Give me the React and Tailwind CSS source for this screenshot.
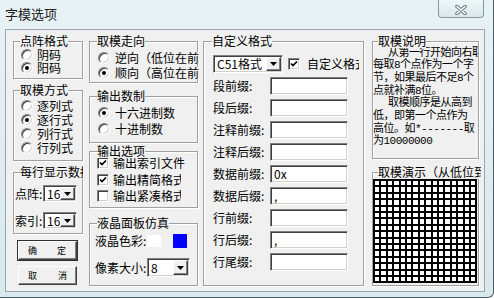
const SUNKEN =
  "border border-t-[#808080] border-l-[#808080] border-r-white border-b-white bg-white shadow-[inset_1px_1px_0_#404040,inset_-1px_-1px_0_#d4d0c8]";
const RAISED =
  "border border-t-white border-l-white border-r-[#404040] border-b-[#404040] bg-[#f0f0f0] shadow-[inset_-1px_-1px_0_#808080]";

function Group({ title, className = "", titleClass = "left-[6px]", children }) {
  return (
    <div
      className={`relative border border-[#a0a0a0] shadow-[1px_1px_0_#fff,inset_1px_1px_0_#fff] ${className}`}
    >
      <span
        className={`absolute top-[-8px] z-10 whitespace-nowrap bg-[#f0f0f0] text-[12px] leading-[14px] ${titleClass}`}
      >
        {title}
      </span>
      {children}
    </div>
  );
}

function Radio({ checked }) {
  return (
    <span
      className={`flex h-[12px] w-[12px] shrink-0 items-center justify-center rounded-full ${SUNKEN}`}
    >
      {checked && <span className="h-[4px] w-[4px] rounded-full bg-black" />}
    </span>
  );
}

function Check({ checked }) {
  return (
    <span className={`flex h-[12px] w-[12px] shrink-0 items-center justify-center ${SUNKEN}`}>
      {checked && (
        <svg width="8" height="8" viewBox="0 0 8 8">
          <path d="M1 3.5 L3 5.6 L7 1.5" stroke="black" strokeWidth="1.7" fill="none" />
        </svg>
      )}
    </span>
  );
}

function Combo({ value, className = "" }) {
  return (
    <div className={`flex items-stretch p-px ${SUNKEN} ${className}`}>
      <span className="flex flex-1 items-center pl-[2px] text-[12px] leading-none">{value}</span>
      <span className={`flex w-[15px] items-center justify-center ${RAISED}`}>
        <svg width="7" height="4" viewBox="0 0 7 4">
          <path d="M0 0H7L3.5 4Z" fill="black" />
        </svg>
      </span>
    </div>
  );
}

function RadioRow({ label, checked, h, gap = "gap-[4px]" }) {
  return (
    <div className={`flex items-center ${h} ${gap}`}>
      <Radio checked={checked} />
      <span className="relative z-10 whitespace-nowrap bg-[#f0f0f0]">{label}</span>
    </div>
  );
}

function Field({ label, value }) {
  return (
    <div className="mt-[4px] flex h-[18px] items-center">
      <span className="w-[57px] whitespace-nowrap">{label}</span>
      <div className={`flex h-[18px] w-[78px] items-center pl-[3px] ${SUNKEN}`}>{value}</div>
    </div>
  );
}

function DotGrid() {
  const lines = [0, 6, 13, 19, 26, 32, 38, 45, 51, 58, 64, 70, 77, 83, 90, 96, 102];
  const cells = [];
  for (let i = 0; i < 16; i++) {
    for (let j = 0; j < 16; j++) {
      cells.push(
        <rect
          key={`${i}-${j}`}
          x={lines[i] + 2}
          y={lines[j] + 2}
          width={lines[i + 1] - lines[i] - 2}
          height={lines[j + 1] - lines[j] - 2}
          fill="white"
        />
      );
    }
  }
  return (
    <svg width="104" height="104" className="block">
      <rect width="104" height="104" fill="black" />
      {cells}
    </svg>
  );
}

const notes = [
  ["从第一行开始向右取", true],
  ["每取8个点作为一个字", false],
  ["节，如果最后不足8个", false],
  ["点就补满8位。", false],
  ["取模顺序是从高到", true],
  ["低，即第一个点作为", false],
  ["高位。如*-------取", false],
  ["为10000000", false],
];

export default function App() {
  return (
    <div className="h-[298px] w-[494px] overflow-hidden rounded-br-[6px] border-r border-b border-[#50606a] bg-gradient-to-b from-[#e7f2f5] to-[#d8e8ed] font-['Noto_Sans_CJK_SC',sans-serif] text-[12px] leading-[12px] text-black">
      <div className="flex h-[29px] items-start justify-between">
        <div className="pl-[5px] pt-[6px] text-[13px] leading-[16px] text-[#1e1e1e]">字模选项</div>
        <div className="mr-[9px] flex h-[18px] w-[46px] items-center justify-center rounded-b-[4px] border border-t-0 border-[#8797a1] bg-gradient-to-b from-[#eef6f8] to-[#dae8ed] pt-[3px]">
          <svg width="12" height="10" viewBox="0 0 12 10">
            <path d="M2 1.5L10 8.5M10 1.5L2 8.5" stroke="#6b7b85" strokeWidth="3.6" strokeLinecap="round" />
            <path d="M2 1.5L10 8.5M10 1.5L2 8.5" stroke="#fff" strokeWidth="1.6" strokeLinecap="round" />
          </svg>
        </div>
      </div>

      <div className="ml-[5px] flex h-[263px] w-[480px] items-start border border-[#98a6ae] bg-[#f0f0f0] pl-[7px] pt-[11px]">
        {/* column 1 */}
        <div className="flex w-[70px] flex-col">
          <Group title="点阵格式" className="h-[38px]">
            <div className="flex flex-col pl-[7px] pt-[6px]">
              <RadioRow label="阴码" h="h-[13px]" />
              <RadioRow label="阳码" checked h="h-[13px]" />
            </div>
          </Group>
          <Group title="取模方式" className="mt-[11px] h-[71px]">
            <div className="flex flex-col pl-[7px] pt-[8px]">
              <RadioRow label="逐列式" h="h-[14px]" />
              <RadioRow label="逐行式" checked h="h-[14px]" />
              <RadioRow label="列行式" h="h-[14px]" />
              <RadioRow label="行列式" h="h-[14px]" />
            </div>
          </Group>
          <Group
            title="每行显示数据"
            className="mt-[11px] h-[62px]"
            titleClass="left-[6px] max-w-[63px] overflow-hidden"
          >
            <div className="flex flex-col gap-[10px] pl-px pt-[12px]">
              <div className="flex items-center">
                <span className="w-[28px]">点阵:</span>
                <Combo value="16" className="h-[17px] w-[34px]" />
              </div>
              <div className="flex items-center">
                <span className="w-[28px]">索引:</span>
                <Combo value="16" className="h-[17px] w-[34px]" />
              </div>
            </div>
          </Group>
          <button className={`ml-[5px] mt-[7px] flex h-[19px] w-[59px] items-center justify-between pl-[9px] pr-[10px] text-[9px] leading-none outline outline-1 outline-[#303030] ${RAISED}`}>
            <span>确</span>
            <span>定</span>
          </button>
          <button className={`ml-[5px] mt-[6px] flex h-[19px] w-[59px] items-center justify-between pl-[9px] pr-[9px] text-[9px] leading-none ${RAISED}`}>
            <span>取</span>
            <span>消</span>
          </button>
        </div>

        {/* column 2 */}
        <div className="ml-[6px] flex w-[109px] flex-col">
          <Group title="取模走向" className="h-[42px]" titleClass="left-[7px]">
            <div className="flex flex-col pl-[8px] pt-[8px]">
              <RadioRow label="逆向（低位在前" h="h-[15px]" gap="gap-[5px]" />
              <RadioRow label="顺向（高位在前" checked h="h-[15px]" gap="gap-[5px]" />
            </div>
          </Group>
          <Group title="输出数制" className="mt-[13px] h-[47px]" titleClass="left-[7px]">
            <div className="flex flex-col pl-[8px] pt-[8px]">
              <RadioRow label="十六进制数" checked h="h-[16px]" gap="gap-[5px]" />
              <RadioRow label="十进制数" h="h-[16px]" gap="gap-[5px]" />
            </div>
          </Group>
          <Group title="输出选项" className="mt-[8px] h-[57px]" titleClass="left-[7px]">
            <div className="flex flex-col pl-[7px] pt-[3px]">
              <div className="flex h-[16.5px] items-center gap-[4px]">
                <Check checked />
                <span className="whitespace-nowrap">输出索引文件</span>
              </div>
              <div className="flex h-[16.5px] items-center gap-[4px]">
                <Check checked />
                <span className="w-[68px] overflow-hidden whitespace-nowrap leading-[16px]">输出精简格式</span>
              </div>
              <div className="flex h-[16.5px] items-center gap-[4px]">
                <Check />
                <span className="w-[68px] overflow-hidden whitespace-nowrap leading-[16px]">输出紧凑格式</span>
              </div>
            </div>
          </Group>
          <Group title="液晶面板仿真" className="mt-[15px] h-[63px]" titleClass="left-[7px]">
            <div className="flex flex-col pl-[5px] pt-[10px]">
              <div className="flex h-[14px] items-center">
                <span className="w-[52px] whitespace-nowrap">液晶色彩:</span>
                <span className="h-[12px] w-[14px] bg-white" />
                <span className="ml-[12px] h-[14px] w-[14px] bg-[#0000ff]" />
              </div>
              <div className="mt-[10px] flex items-center">
                <span className="w-[52px] whitespace-nowrap">像素大小:</span>
                <Combo value="8" className="h-[19px] w-[43px]" />
              </div>
            </div>
          </Group>
        </div>

        {/* column 3 */}
        <Group title="自定义格式" className="ml-[5px] h-[245px] w-[161px]" titleClass="left-[8px]">
          <div className="flex flex-col pl-[9px] pt-[13px]">
            <div className="flex h-[18px] items-center">
              <Combo value="C51格式" className="h-[18px] w-[70px]" />
              <span className="ml-[5px]">
                <Check checked />
              </span>
              <span className="ml-[7px] w-[52px] overflow-hidden whitespace-nowrap leading-[16px]">自定义格式</span>
            </div>
            <Field label="段前缀:" />
            <Field label="段后缀:" />
            <Field label="注释前缀:" />
            <Field label="注释后缀:" />
            <Field label="数据前缀:" value="0x" />
            <Field label="数据后缀:" value="," />
            <Field label="行前缀:" />
            <Field label="行后缀:" value="," />
            <Field label="行尾缀:" />
          </div>
        </Group>

        {/* column 4 */}
        <div className="ml-[8px] flex w-[107px] flex-col">
          <Group title="取模说明" className="h-[118px]" titleClass="left-[5px]">
            <div className="h-full overflow-hidden pt-[4.5px] font-['Liberation_Mono','Noto_Sans_CJK_SC',monospace] text-[11px] leading-[12.7px] tracking-[-0.5px]">
              {notes.map(([t, indent], i) => (
                <div key={i} className={`whitespace-nowrap ${indent ? "pl-[15px]" : ""}`}>
                  {t}
                </div>
              ))}
            </div>
          </Group>
          <Group
            title="取模演示（从低位到高位）"
            className="mt-[13px] h-[114px]"
            titleClass="left-[5px] max-w-[103px] overflow-hidden"
          >
            <div className="h-full overflow-hidden pt-[6px]">
              <DotGrid />
            </div>
          </Group>
        </div>
      </div>
    </div>
  );
}
